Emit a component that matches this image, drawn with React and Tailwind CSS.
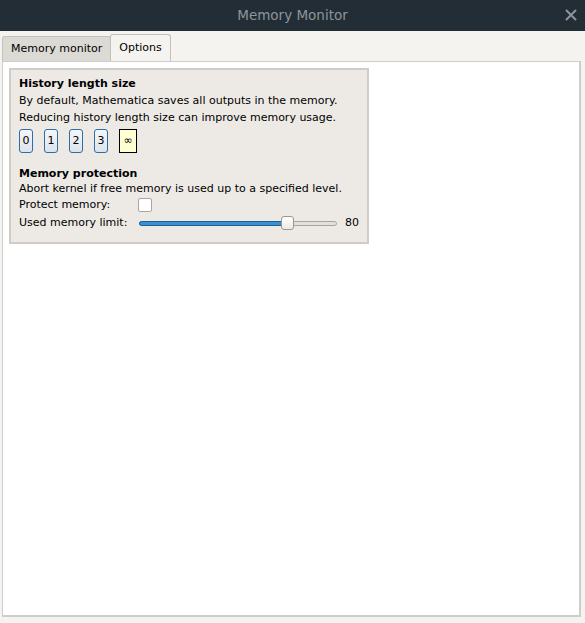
export default function App() {
  const font = { fontFamily: '"DejaVu Sans", sans-serif' }
  return (
    <div className="w-[585px] h-[623px] bg-[#f4f3f0] flex flex-col text-[11px] text-black" style={font}>
      <div className="h-[31px] bg-[#232d35] flex items-center justify-center relative shrink-0">
        <span className="text-[13.5px] text-[#8c959b]">Memory Monitor</span>
        <svg className="absolute right-[8px] top-[9px]" width="12" height="12" viewBox="0 0 12 12">
          <path d="M1 1L11 11M11 1L1 11" stroke="#8c959b" strokeWidth="2" />
        </svg>
      </div>
      <div className="flex items-end pl-[2px] h-[30px] shrink-0">
        <div className="h-[25px] px-[8px] flex items-center bg-[#dcdad5] border border-b-0 border-[#c4c1bc] rounded-t-[3px] text-[11px]">Memory monitor</div>
        <div className="h-[27px] px-[8px] flex items-center bg-[#f4f3f0] border border-b-0 border-[#c4c1bc] rounded-t-[3px] text-[11px] -ml-px">Options</div>
      </div>
      <div className="ml-[2px] w-[579px] h-[556px] bg-white border-r-2 border-b-2 border-l border-t border-[#cfcdca] pt-[6px] pl-[6px]">
        <div className="w-[360px] bg-[#edeae6] border-2 border-[#d0cdc9] pl-[8px] pt-[7px] pb-[12px]">
          <div className="font-bold leading-[14px]">History length size</div>
          <div className="leading-[17px] mt-[1px]">By default, Mathematica saves all outputs in the memory.</div>
          <div className="leading-[17px]">Reducing history length size can improve memory usage.</div>
          <div className="flex gap-[11px] mt-[3px]">
            {["0", "1", "2", "3"].map((n) => (
              <div key={n} className="w-[14px] h-[24px] flex items-center justify-center rounded-[3px] border border-[#2a6fa6] bg-gradient-to-b from-[#f5f7f9] to-[#dde3ea] text-[11px]">{n}</div>
            ))}
            <div className="w-[18px] h-[24px] flex items-center justify-center border border-black bg-[#ffffd2] text-[11px]">∞</div>
          </div>
          <div className="font-bold leading-[14px] mt-[14px]">Memory protection</div>
          <div className="leading-[14px] mt-[1px]">Abort kernel if free memory is used up to a specified level.</div>
          <div className="flex items-center mt-[2px] h-[14px]">
            <span className="w-[119px]">Protect memory:</span>
            <div className="w-[14px] h-[14px] bg-white border border-[#a9a6a2] rounded-[2px]"></div>
          </div>
          <div className="flex items-center mt-[4px] h-[14px]">
            <span className="w-[120px]">Used memory limit:</span>
            <div className="relative w-[198px] h-[14px] flex items-center">
              <div className="w-full h-[5px] rounded-full border border-[#a7a5a2] bg-[#e2e0dd]"></div>
              <div className="absolute left-0 w-[147px] h-[5px] rounded-full border border-[#1f5f93] bg-[#3a8fd3]"></div>
              <div className="absolute left-[142px] top-0 w-[13px] h-[14px] rounded-[3px] border border-[#9a9895] bg-gradient-to-b from-white to-[#eceae7]"></div>
            </div>
            <span className="ml-[8px]">80</span>
          </div>
        </div>
      </div>
    </div>
  )
}
